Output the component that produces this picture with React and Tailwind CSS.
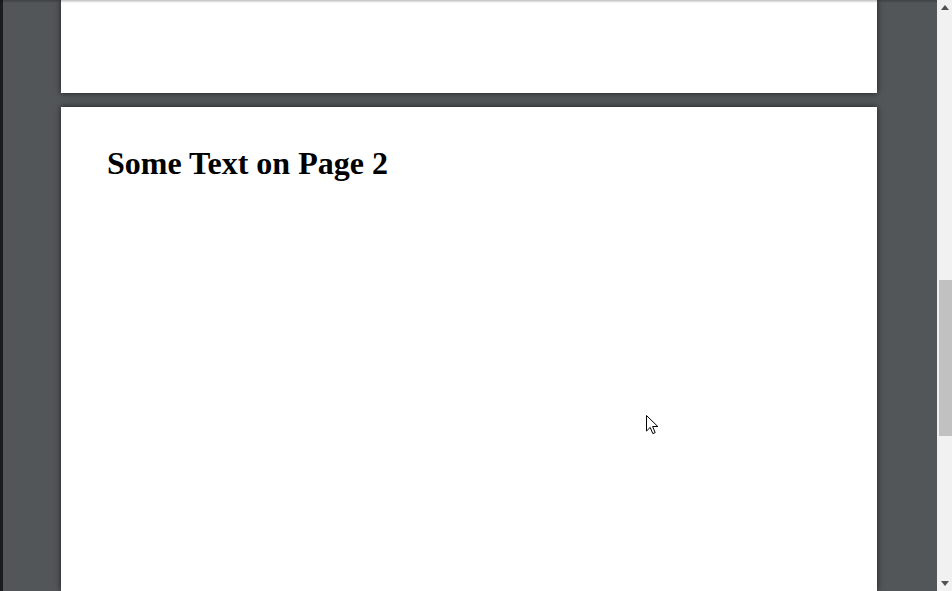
import React from "react";

// PDF viewer, scrolled to the top of page 2

const Cursor = () => (
  <svg width="13" height="20" viewBox="0 0 13 20" className="absolute left-[646px] top-[415px]">
    <path d="M0.5 0.5 L0.5 16 L4.2 12.4 L6.8 18.6 L9.2 17.6 L6.6 11.5 L11.8 11.5 Z" fill="#fff" stroke="#000" strokeWidth="1" strokeLinejoin="miter" />
  </svg>
);

const Scrollbar = () => (
  <div className="w-[15px] h-full bg-[#f1f1f1] flex flex-col">
    <div className="h-[15px] flex items-center justify-center">
      <svg width="8" height="5" viewBox="0 0 8 5"><path d="M0 5 L4 0 L8 5 Z" fill="#505050" /></svg>
    </div>
    <div className="flex-1 flex flex-col">
      <div className="h-[265px]" />
      <div className="h-[156px] ml-[2px] bg-[#c1c1c1]" />
    </div>
    <div className="h-[15px] flex items-center justify-center">
      <svg width="8" height="5" viewBox="0 0 8 5"><path d="M0 0 L8 0 L4 5 Z" fill="#505050" /></svg>
    </div>
  </div>
);

export default function App() {
  return (
    <div className="relative w-[952px] h-[591px] flex overflow-hidden bg-[#525659]" style={{ fontFamily: "'Liberation Serif', 'Times New Roman', serif" }}>
      <div className="w-[3px] h-full bg-[#1b1c1e]" />
      <div className="flex-1 h-full pl-[58px] flex flex-col gap-[14px]">
        <div className="w-[816px] h-[93px] bg-white shadow-[0_0_6px_rgba(0,0,0,0.65)]" />
        <div className="w-[816px] flex-1 bg-white shadow-[0_0_6px_rgba(0,0,0,0.65)] pl-[46px] pt-[36px]">
          <h1 className="text-[32px] leading-[40px] font-bold text-black">Some Text on Page 2</h1>
        </div>
      </div>
      <Scrollbar />
      <div className="absolute top-0 left-0 w-[937px] h-[3px] bg-gradient-to-b from-black/25 to-transparent" />
      <Cursor />
    </div>
  );
}
